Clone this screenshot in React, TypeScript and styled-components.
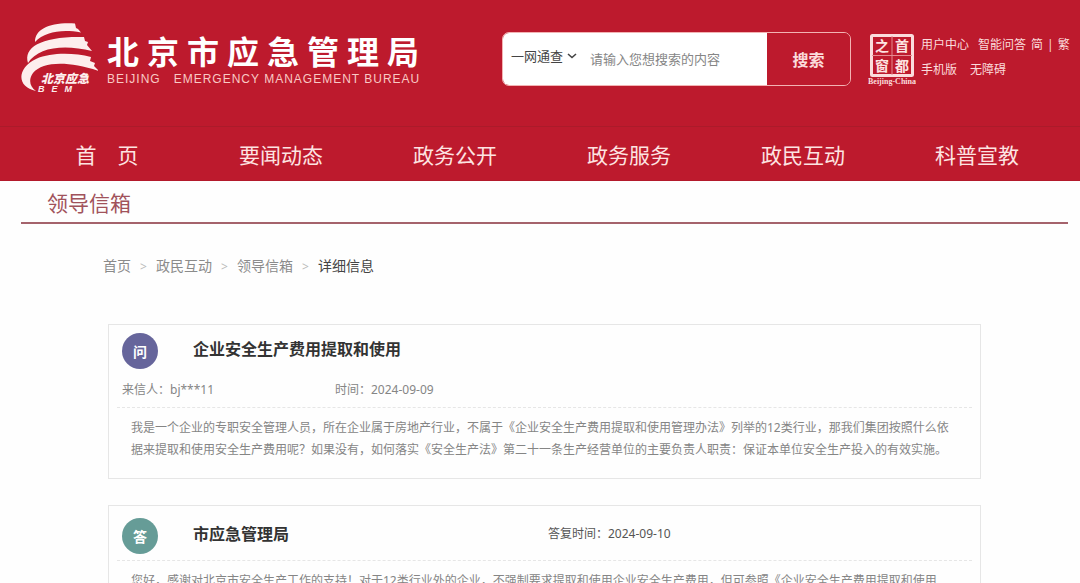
import React from "react";
import styled, { createGlobalStyle } from "styled-components";

const GlobalStyle = createGlobalStyle`
  * { box-sizing: border-box; }
  body {
    margin: 0;
    background: #fefefe;
    color: #333;
    font-family: "Noto Sans", "Noto Sans CJK SC", sans-serif;
    font-size: 12px;
  }
  a { color: inherit; text-decoration: none; }
  h1, h2, p, ol { margin: 0; padding: 0; }
`;

const Header = styled.header`
  background: #bd1a2d;
  color: #fff;
`;

const Masthead = styled.div`
  display: flex;
  align-items: flex-start;
  height: 126px;
  padding: 22px 8px 0 20px;
`;

const Brand = styled.a`
  display: flex;
  flex: 1;
  gap: 9px;
`;

const BrandName = styled.div`
  display: flex;
  flex-direction: column;
  padding-top: 7px;
  white-space: nowrap;
`;

const BrandTitle = styled.span`
  font-family: "Noto Sans CJK SC", sans-serif;
  font-size: 32px;
  font-weight: 700;
  line-height: 42px;
  letter-spacing: 8px;
`;

const BrandSubtitle = styled.span`
  font-family: "Liberation Sans", sans-serif;
  font-size: 12px;
  line-height: 16px;
  letter-spacing: 1px;
  color: #f9c9c4;
  white-space: pre;
`;

const SearchForm = styled.form`
  display: flex;
  width: 349px;
  height: 54px;
  margin: 10px 17px 0 0;
  border: 1px solid #f3b3b3;
  border-radius: 7px;
  overflow: hidden;
`;

const SearchFields = styled.div`
  display: flex;
  flex: 1;
  align-items: center;
  min-width: 0;
  background: #fff;
`;

const ScopeWrap = styled.label`
  display: flex;
  align-items: center;
  padding: 0 0 6px 8px;
  color: #444;
`;

const Scope = styled.select`
  appearance: none;
  width: 56px;
  padding: 0;
  border: 0;
  background: transparent;
  color: inherit;
  font: inherit;
  font-size: 13px;
  line-height: 20px;
`;

const SearchInput = styled.input`
  flex: 1;
  min-width: 0;
  margin-left: 13px;
  padding: 0;
  border: 0;
  outline: 0;
  font: inherit;
  font-size: 13px;
  line-height: 20px;
  color: #444;
  &::placeholder { color: #868686; opacity: 1; }
`;

const SearchButton = styled.button`
  flex: none;
  width: 83px;
  padding: 0;
  border: 0;
  background: #bd1a2d;
  color: #fbdcdc;
  font: inherit;
  font-size: 16px;
  font-weight: 700;
`;

const SealLink = styled.a`
  display: flex;
  flex-direction: column;
  align-items: center;
  width: 48px;
  margin: 12px 5px 0 0;
`;

const Tools = styled.div`
  display: flex;
  flex-direction: column;
  gap: 5px;
  width: 151px;
  padding-top: 13px;
  line-height: 20px;
  color: #fbdcdc;
  white-space: nowrap;
`;

const ToolRow = styled.div<{ $gap: number }>`
  display: flex;
  gap: ${(p) => p.$gap}px;
`;

const Variants = styled.span`
  display: flex;
  gap: 4px;
`;

const Nav = styled.nav`
  display: grid;
  grid-template-columns: repeat(6, 1fr);
  height: 55px;
  padding: 0 16px 0 20px;
  border-top: 1px solid #ab1b2a;
  border-bottom: 1px solid #b3192b;
`;

const NavLink = styled.a`
  display: flex;
  align-items: center;
  justify-content: center;
  padding-top: 1px;
  font-size: 21px;
  color: #fde4e2;
`;

const SectionTitle = styled.h1`
  margin: 0 12px 0 21px;
  padding: 6px 26px 3px;
  border-bottom: 2px solid #a5636c;
  color: #a1525b;
  font-size: 21px;
  font-weight: 400;
  line-height: 32px;
`;

const Crumbs = styled.ol`
  display: flex;
  margin: 31px 0 0 103px;
  list-style: none;
  font-size: 14px;
  line-height: 22px;
  color: #8b8b8b;
`;

const Crumb = styled.li`
  & + &::before {
    content: ">";
    display: inline-block;
    width: 25px;
    text-align: center;
    font-size: 12px;
    color: #bbb;
  }
  &:last-child { color: #444; }
`;

const Letters = styled.main`
  display: flex;
  flex-direction: column;
  gap: 26px;
  margin: 46px 99px 0 108px;
`;

const Card = styled.article<{ $top: number }>`
  padding: ${(p) => p.$top}px 8px 8px;
  border: 1px solid #e6e6e6;
`;

const CardHead = styled.div`
  display: flex;
  align-items: center;
  padding-left: 5px;
`;

const Badge = styled.span<{ $color: string }>`
  display: flex;
  align-items: center;
  justify-content: center;
  width: 36px;
  height: 36px;
  margin-right: 35px;
  border-radius: 50%;
  background: ${(p) => p.$color};
  color: #fff;
  font-size: 14px;
  font-weight: 700;
`;

const HeadText = styled.div`
  display: flex;
  align-items: center;
  padding-bottom: 4px;
  color: #555;
`;

const CardTitle = styled.h2`
  width: 355px;
  font-size: 16px;
  line-height: 24px;
  color: #333;
`;

const Meta = styled.p`
  line-height: 20px;
`;

const MetaRow = styled.div`
  display: grid;
  grid-template-columns: 213px 1fr;
  padding: 11px 0 1px 5px;
  color: #858585;
`;

const Body = styled.p`
  margin-top: 6px;
  padding: 9px 20px 9px 14px;
  border-top: 1px dashed #e6e6e6;
  line-height: 22px;
  color: #858585;
`;

const Logo = () => (
  <svg width="78" height="72" viewBox="20 22 78 72" role="img" aria-label="北京应急">
    <g fill="#fdeeed">
      <path d="M35 42C35 29 50 22 75 23.500L76 28L78 29L81 32.500C61 29 45 32 35 42Z" />
      <path d="M28 63C23 47 42 36 84 37L85 41L88 42L87 45L92 51C64 44 38 47 28 63Z" />
      <path d="M36 91C16 87 17 68 36 59C52 52 74 53 91 57L90 61L95 63L94 66L99 71C69 61 43 61 33 73C28 80 30 87 36 91Z" />
    </g>
    <g fill="#fdeeed" fontStyle="italic" fontWeight="900">
      <text x="41" y="83" fontSize="12" fontFamily="'Noto Sans CJK SC', sans-serif">北京应急</text>
      <text x="38" y="92" fontSize="9" letterSpacing="7" fontFamily="'Liberation Sans', sans-serif">BEM</text>
    </g>
  </svg>
);

const Seal = () => (
  <svg width="48" height="52" viewBox="0 0 48 52" role="img" aria-label="首都之窗">
    <rect x="3.500" y="1.500" width="41" height="40" rx="1" fill="none" stroke="#fbdcdc" strokeWidth="3" />
    <path d="M24 2V41M4 21.500H44" stroke="#e58a90" fill="none" />
    <g fill="#fde4e2" fontFamily="'Noto Sans CJK SC', sans-serif" fontWeight="700" fontSize="14" textAnchor="middle">
      <text x="14" y="17">之</text>
      <text x="34" y="17">首</text>
      <text x="14" y="37">窗</text>
      <text x="34" y="37">都</text>
    </g>
    <text x="24" y="50" fill="#fbdcdc" fontFamily="'Liberation Serif', serif" fontWeight="700" fontSize="8" textAnchor="middle">Beijing-China</text>
  </svg>
);

const Chevron = () => (
  <svg width="10" height="8" viewBox="0 0 10 8" fill="none" stroke="#444" strokeWidth="1.600" aria-hidden="true">
    <path d="M1 2L5 5.500L9 2" />
  </svg>
);

const navItems = ["首　页", "要闻动态", "政务公开", "政务服务", "政民互动", "科普宣教"];
const crumbs = ["首页", "政民互动", "领导信箱", "详细信息"];

export default function App() {
  return (
    <>
      <GlobalStyle />
      <Header>
        <Masthead>
          <Brand href="#">
            <Logo />
            <BrandName>
              <BrandTitle>北京市应急管理局</BrandTitle>
              <BrandSubtitle>{"BEIJING   EMERGENCY MANAGEMENT BUREAU"}</BrandSubtitle>
            </BrandName>
          </Brand>
          <SearchForm onSubmit={(e) => e.preventDefault()}>
            <SearchFields>
              <ScopeWrap>
                <Scope aria-label="搜索范围">
                  <option>一网通查</option>
                </Scope>
                <Chevron />
              </ScopeWrap>
              <SearchInput type="text" aria-label="搜索内容" placeholder="请输入您想搜索的内容" />
            </SearchFields>
            <SearchButton type="submit">搜索</SearchButton>
          </SearchForm>
          <SealLink href="#">
            <Seal />
          </SealLink>
          <Tools>
            <ToolRow $gap={5}>
              <ToolRow $gap={9}>
                <a href="#">用户中心</a>
                <a href="#">智能问答</a>
              </ToolRow>
              <Variants>
                <a href="#">简</a>
                <span>|</span>
                <a href="#">繁</a>
              </Variants>
            </ToolRow>
            <ToolRow $gap={13}>
              <a href="#">手机版</a>
              <a href="#">无障碍</a>
            </ToolRow>
          </Tools>
        </Masthead>
        <Nav>
          {navItems.map((item) => (
            <NavLink href="#" key={item}>{item}</NavLink>
          ))}
        </Nav>
      </Header>
      <SectionTitle>领导信箱</SectionTitle>
      <nav aria-label="面包屑">
        <Crumbs>
          {crumbs.map((item) => (
            <Crumb key={item}><a href="#">{item}</a></Crumb>
          ))}
        </Crumbs>
      </nav>
      <Letters>
        <Card $top={8}>
          <CardHead>
            <Badge $color="#66659b">问</Badge>
            <HeadText>
              <CardTitle>企业安全生产费用提取和使用</CardTitle>
            </HeadText>
          </CardHead>
          <MetaRow>
            <Meta>来信人：bj***11</Meta>
            <Meta>时间：2024-09-09</Meta>
          </MetaRow>
          <Body>
            我是一个企业的专职安全管理人员，所在企业属于房地产行业，不属于《企业安全生产费用提取和使用管理办法》列举的12类行业，那我们集团按照什么依据来提取和使用安全生产费用呢？如果没有，如何落实《安全生产法》第二十一条生产经营单位的主要负责人职责：保证本单位安全生产投入的有效实施。
          </Body>
        </Card>
        <Card $top={12}>
          <CardHead>
            <Badge $color="#669c97">答</Badge>
            <HeadText>
              <CardTitle>市应急管理局</CardTitle>
              <Meta>答复时间：2024-09-10</Meta>
            </HeadText>
          </CardHead>
          <Body>
            您好，感谢对北京市安全生产工作的支持！对于12类行业外的企业，不强制要求提取和使用企业安全生产费用，但可参照《企业安全生产费用提取和使用
          </Body>
        </Card>
      </Letters>
    </>
  );
}
